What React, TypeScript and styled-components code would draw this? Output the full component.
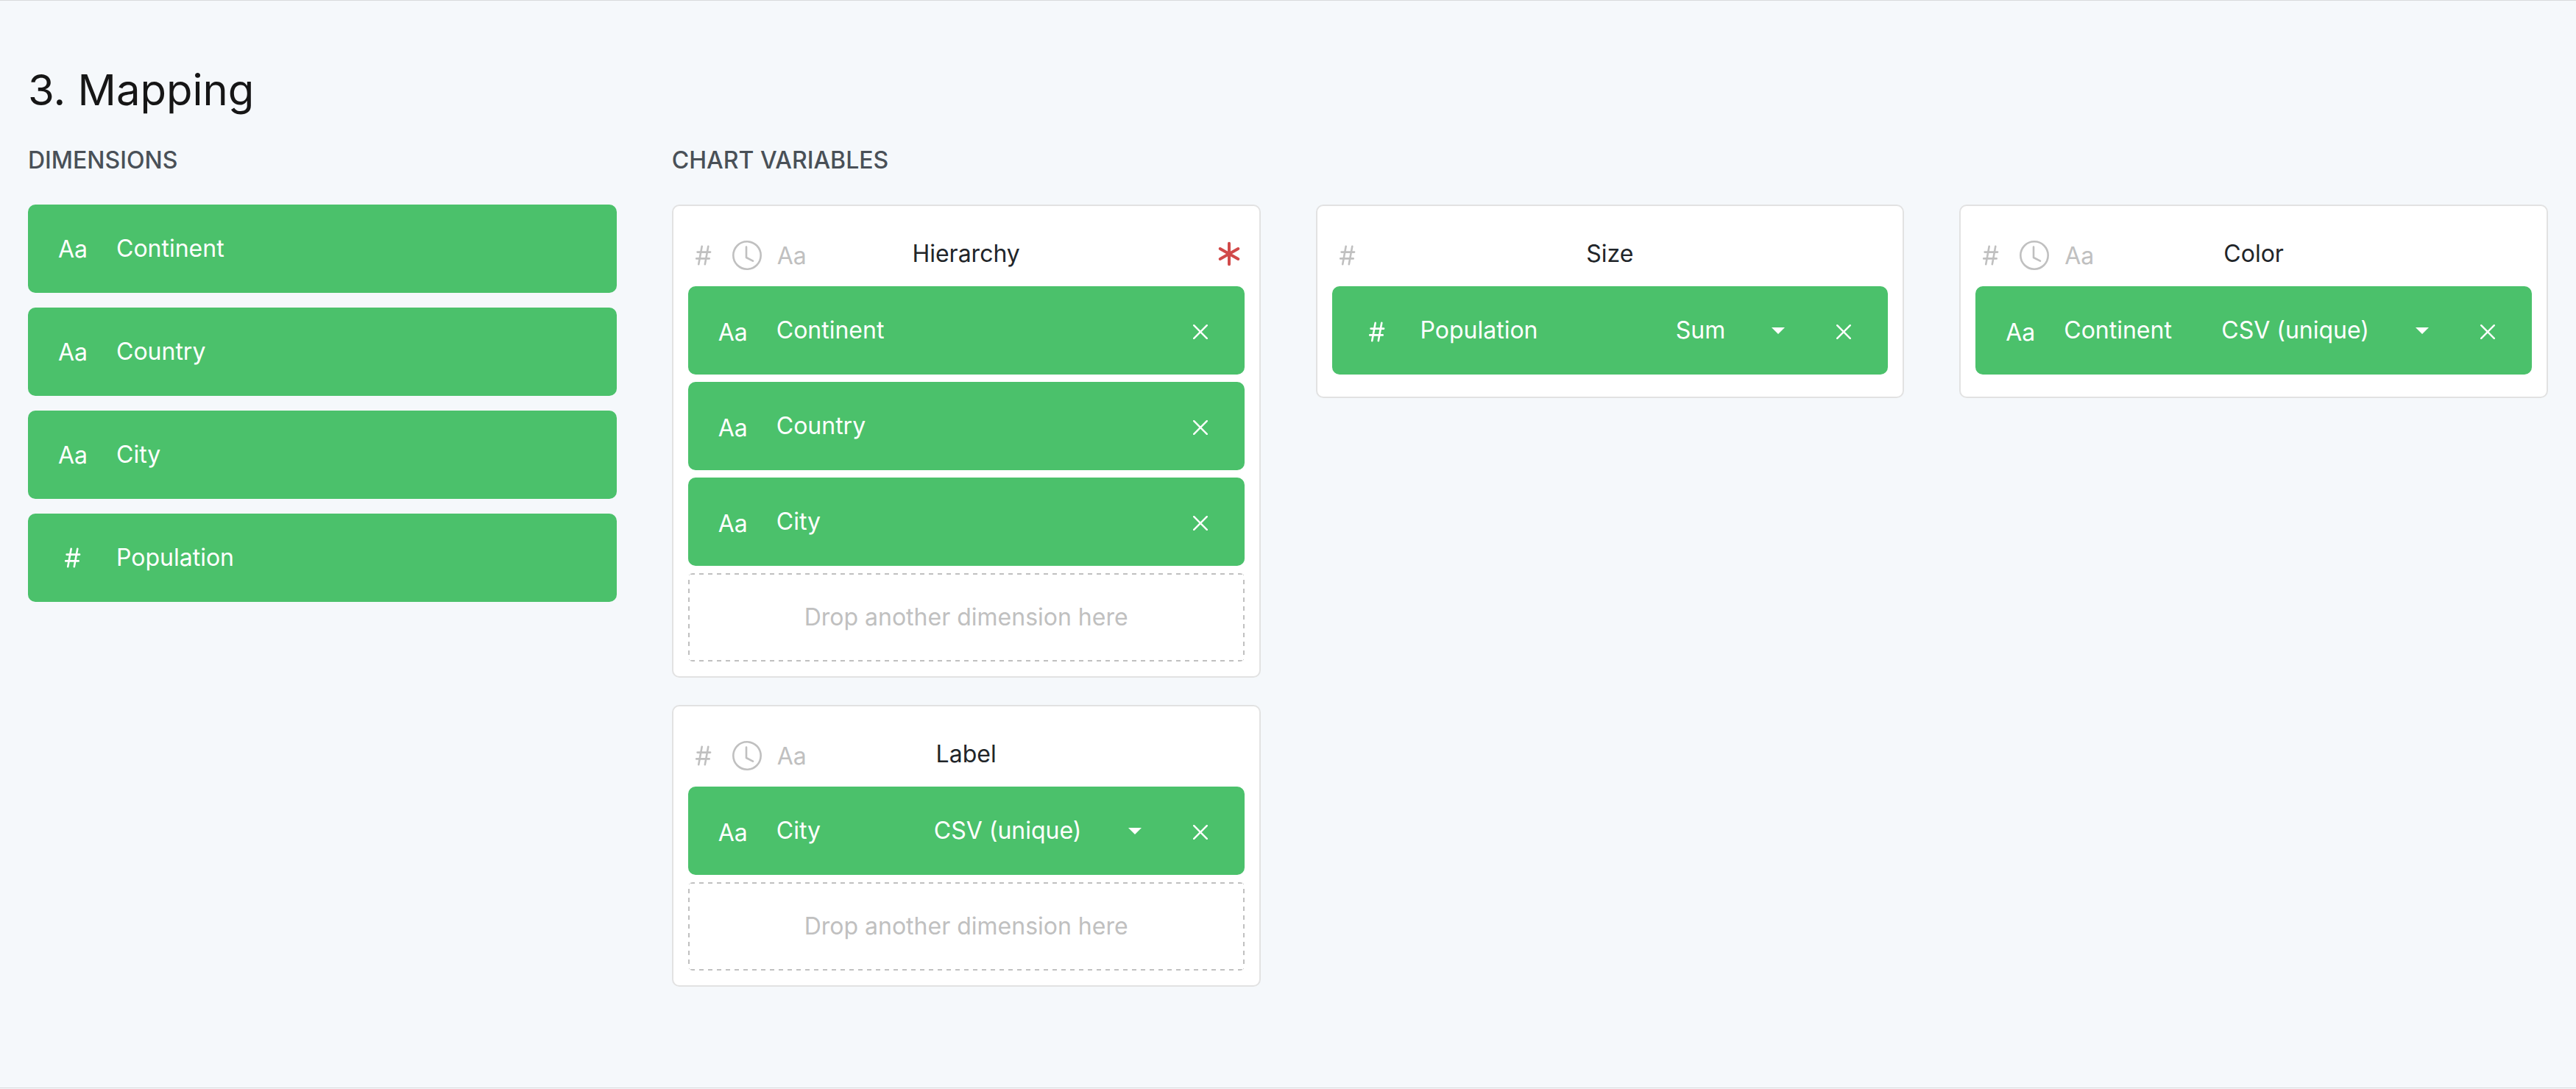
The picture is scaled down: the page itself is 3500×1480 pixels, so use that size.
import React from 'react';
import styled, { createGlobalStyle } from 'styled-components';

type DataType = 'number' | 'date' | 'string';

interface Assigned {
  name: string;
  type: DataType;
  aggregation?: string;
}

interface Variable {
  name: string;
  accepts: DataType[];
  required?: boolean;
  multiple?: boolean;
  assigned: Assigned[];
}

const dimensions: Assigned[] = [
  { name: 'Continent', type: 'string' },
  { name: 'Country', type: 'string' },
  { name: 'City', type: 'string' },
  { name: 'Population', type: 'number' },
];

const everyType: DataType[] = ['number', 'date', 'string'];

const columns: Variable[][] = [
  [
    {
      name: 'Hierarchy',
      accepts: everyType,
      required: true,
      multiple: true,
      assigned: [
        { name: 'Continent', type: 'string' },
        { name: 'Country', type: 'string' },
        { name: 'City', type: 'string' },
      ],
    },
    {
      name: 'Label',
      accepts: everyType,
      multiple: true,
      assigned: [{ name: 'City', type: 'string', aggregation: 'CSV (unique)' }],
    },
  ],
  [
    {
      name: 'Size',
      accepts: ['number'],
      assigned: [{ name: 'Population', type: 'number', aggregation: 'Sum' }],
    },
  ],
  [
    {
      name: 'Color',
      accepts: everyType,
      assigned: [{ name: 'Continent', type: 'string', aggregation: 'CSV (unique)' }],
    },
  ],
];

const GlobalStyle = createGlobalStyle`
  *, *::before, *::after { box-sizing: border-box; }
  body {
    margin: 0;
    background: #f5f8fb;
    color: #212529;
    font-family: Inter, "Liberation Sans", sans-serif;
    font-size: 32px;
    line-height: 40px;
  }
`;

const Section = styled.section`
  padding: 85px 38px 137px;
  border-top: 1px solid #d8dadc;
  border-bottom: 1px solid #d8dadc;
`;

const Title = styled.h2`
  margin: 0 0 40px;
  color: #161616;
  font-size: 58px;
  font-weight: 400;
  line-height: 72px;
`;

const Grid = styled.div`
  display: grid;
  grid-template-columns: repeat(4, minmax(0, 1fr));
  column-gap: 75px;
  align-items: start;
`;

const Heading = styled.h3<{ $span?: number }>`
  grid-column: span ${(p) => p.$span ?? 1};
  margin: 0 0 40px;
  color: #495057;
  font-size: 32px;
  font-weight: 500;
  text-transform: uppercase;
`;

const List = styled.ul<{ $gap: number }>`
  display: grid;
  gap: ${(p) => p.$gap}px;
  margin: 0;
  padding: 0;
  list-style: none;
`;

const Stack = styled.div`
  display: grid;
  gap: 37px;
`;

const Card = styled.article`
  padding: 20px;
  border: 2px solid #e2e2e2;
  border-radius: 10px;
  background: #fff;
`;

const CardHeader = styled.header`
  display: grid;
  grid-template-columns: 1fr auto 1fr;
  align-items: center;
  height: 89px;
`;

const CardTitle = styled.h4`
  margin: 0;
  font-size: 32px;
  font-weight: 400;
`;

const Accepts = styled.div`
  display: flex;
  gap: 20px;
  padding-top: 4px;
  color: #c0c0c0;
`;

const Required = styled.span`
  display: flex;
  justify-self: end;
  color: #d14a4a;
`;

const Pill = styled.li`
  display: flex;
  align-items: center;
  gap: 40px;
  height: 120px;
  padding: 0 40px;
  border-radius: 10px;
  background: #4bc16b;
  color: #fff;
`;

const SlotPill = styled(Pill)`
  margin-bottom: 10px;
`;

const Name = styled.span`
  flex: 1;
`;

const IconBox = styled.span`
  display: flex;
  align-items: center;
  justify-content: center;
  width: 40px;
  height: 40px;
  white-space: nowrap;
`;

const TextIcon = styled(IconBox)`
  padding: 2px 0 0 2px;
`;

const SlotIcon = styled.span`
  padding-top: 4px;
`;

const SelectWrap = styled.span`
  display: grid;
  align-items: center;

  > * { grid-area: 1 / 1; }
  > svg { justify-self: end; pointer-events: none; }
`;

const Select = styled.select`
  appearance: none;
  field-sizing: content;
  height: 60px;
  margin: 0;
  padding: 0 81px 0 0;
  border: 0;
  background: transparent;
  color: inherit;
  font: inherit;
  cursor: pointer;
`;

const Remove = styled.button`
  display: flex;
  margin-left: 20px;
  padding: 14px 10px 10px;
  border: 0;
  background: transparent;
  color: inherit;
  cursor: pointer;
`;

const dash = 'transparent 25%, #c0c0c0 25% 75%, transparent 75%';

const DropZone = styled.div`
  display: flex;
  align-items: center;
  justify-content: center;
  height: 120px;
  border-radius: 6px;
  background:
    linear-gradient(90deg, ${dash}) top / 12px 2px round no-repeat,
    linear-gradient(90deg, ${dash}) bottom / 12px 2px round no-repeat,
    linear-gradient(${dash}) left / 2px 12px no-repeat round,
    linear-gradient(${dash}) right / 2px 12px no-repeat round;
  color: #c0c0c0;
`;

function TypeIcon({ type }: { type: DataType }) {
  if (type === 'string') return <TextIcon>Aa</TextIcon>;
  if (type === 'date') {
    return (
      <IconBox>
        <svg width="40" height="40" viewBox="0 0 40 40" fill="none" stroke="currentColor" strokeWidth="2.6" strokeLinecap="round" strokeLinejoin="round" aria-label="Date">
          <circle cx="20" cy="20" r="18.7" />
          <path d="M19 8.5V23l9 4.7" />
        </svg>
      </IconBox>
    );
  }
  return (
    <IconBox>
      <svg width="40" height="40" viewBox="0 0 40 40" fill="none" stroke="currentColor" strokeWidth="2.6" strokeLinecap="round" aria-label="Number">
        <path d="M18.7 7.8l-4.5 24.4M27.3 7.8l-4.5 24.4M12.6 15.6h17.5M11.2 24.4h17.5" />
      </svg>
    </IconBox>
  );
}

function VariableCard({ variable }: { variable: Variable }) {
  return (
    <Card>
      <CardHeader>
        <Accepts>
          {variable.accepts.map((type) => (
            <TypeIcon key={type} type={type} />
          ))}
        </Accepts>
        <CardTitle>{variable.name}</CardTitle>
        {variable.required && (
          <Required>
            <svg width="40" height="40" viewBox="0 0 40 40" fill="none" stroke="currentColor" strokeWidth="4" strokeLinecap="round" aria-label="Required">
              <path d="M19 5.8v28.4M6.7 13l24.6 14M31.3 13L6.7 27" />
            </svg>
          </Required>
        )}
      </CardHeader>
      <List $gap={0}>
        {variable.assigned.map((item) => (
          <SlotPill key={item.name}>
            <SlotIcon>
              <TypeIcon type={item.type} />
            </SlotIcon>
            <Name>{item.name}</Name>
            {item.aggregation && (
              <SelectWrap>
                <Select aria-label={`${variable.name} aggregation`} defaultValue={item.aggregation}>
                  <option>{item.aggregation}</option>
                </Select>
                <svg width="18" height="9" viewBox="0 0 18 9" fill="currentColor" aria-hidden="true">
                  <path d="M0 0h18L9 9z" />
                </svg>
              </SelectWrap>
            )}
            <Remove type="button" aria-label={`Remove ${item.name}`}>
              <svg width="20" height="20" viewBox="0 0 20 20" fill="none" stroke="currentColor" strokeWidth="2.4" strokeLinecap="round">
                <path d="M1.2 1.2l17.6 17.6M18.8 1.2L1.2 18.8" />
              </svg>
            </Remove>
          </SlotPill>
        ))}
      </List>
      {variable.multiple && <DropZone>Drop another dimension here</DropZone>}
    </Card>
  );
}

export default function App() {
  return (
    <>
      <GlobalStyle />
      <Section>
        <Title>3. Mapping</Title>
        <Grid>
          <Heading>Dimensions</Heading>
          <Heading $span={3}>Chart variables</Heading>
          <List $gap={20}>
            {dimensions.map((d) => (
              <Pill key={d.name}>
                <TypeIcon type={d.type} />
                <Name>{d.name}</Name>
              </Pill>
            ))}
          </List>
          {columns.map((variables) => (
            <Stack key={variables[0].name}>
              {variables.map((v) => (
                <VariableCard key={v.name} variable={v} />
              ))}
            </Stack>
          ))}
        </Grid>
      </Section>
    </>
  );
}
